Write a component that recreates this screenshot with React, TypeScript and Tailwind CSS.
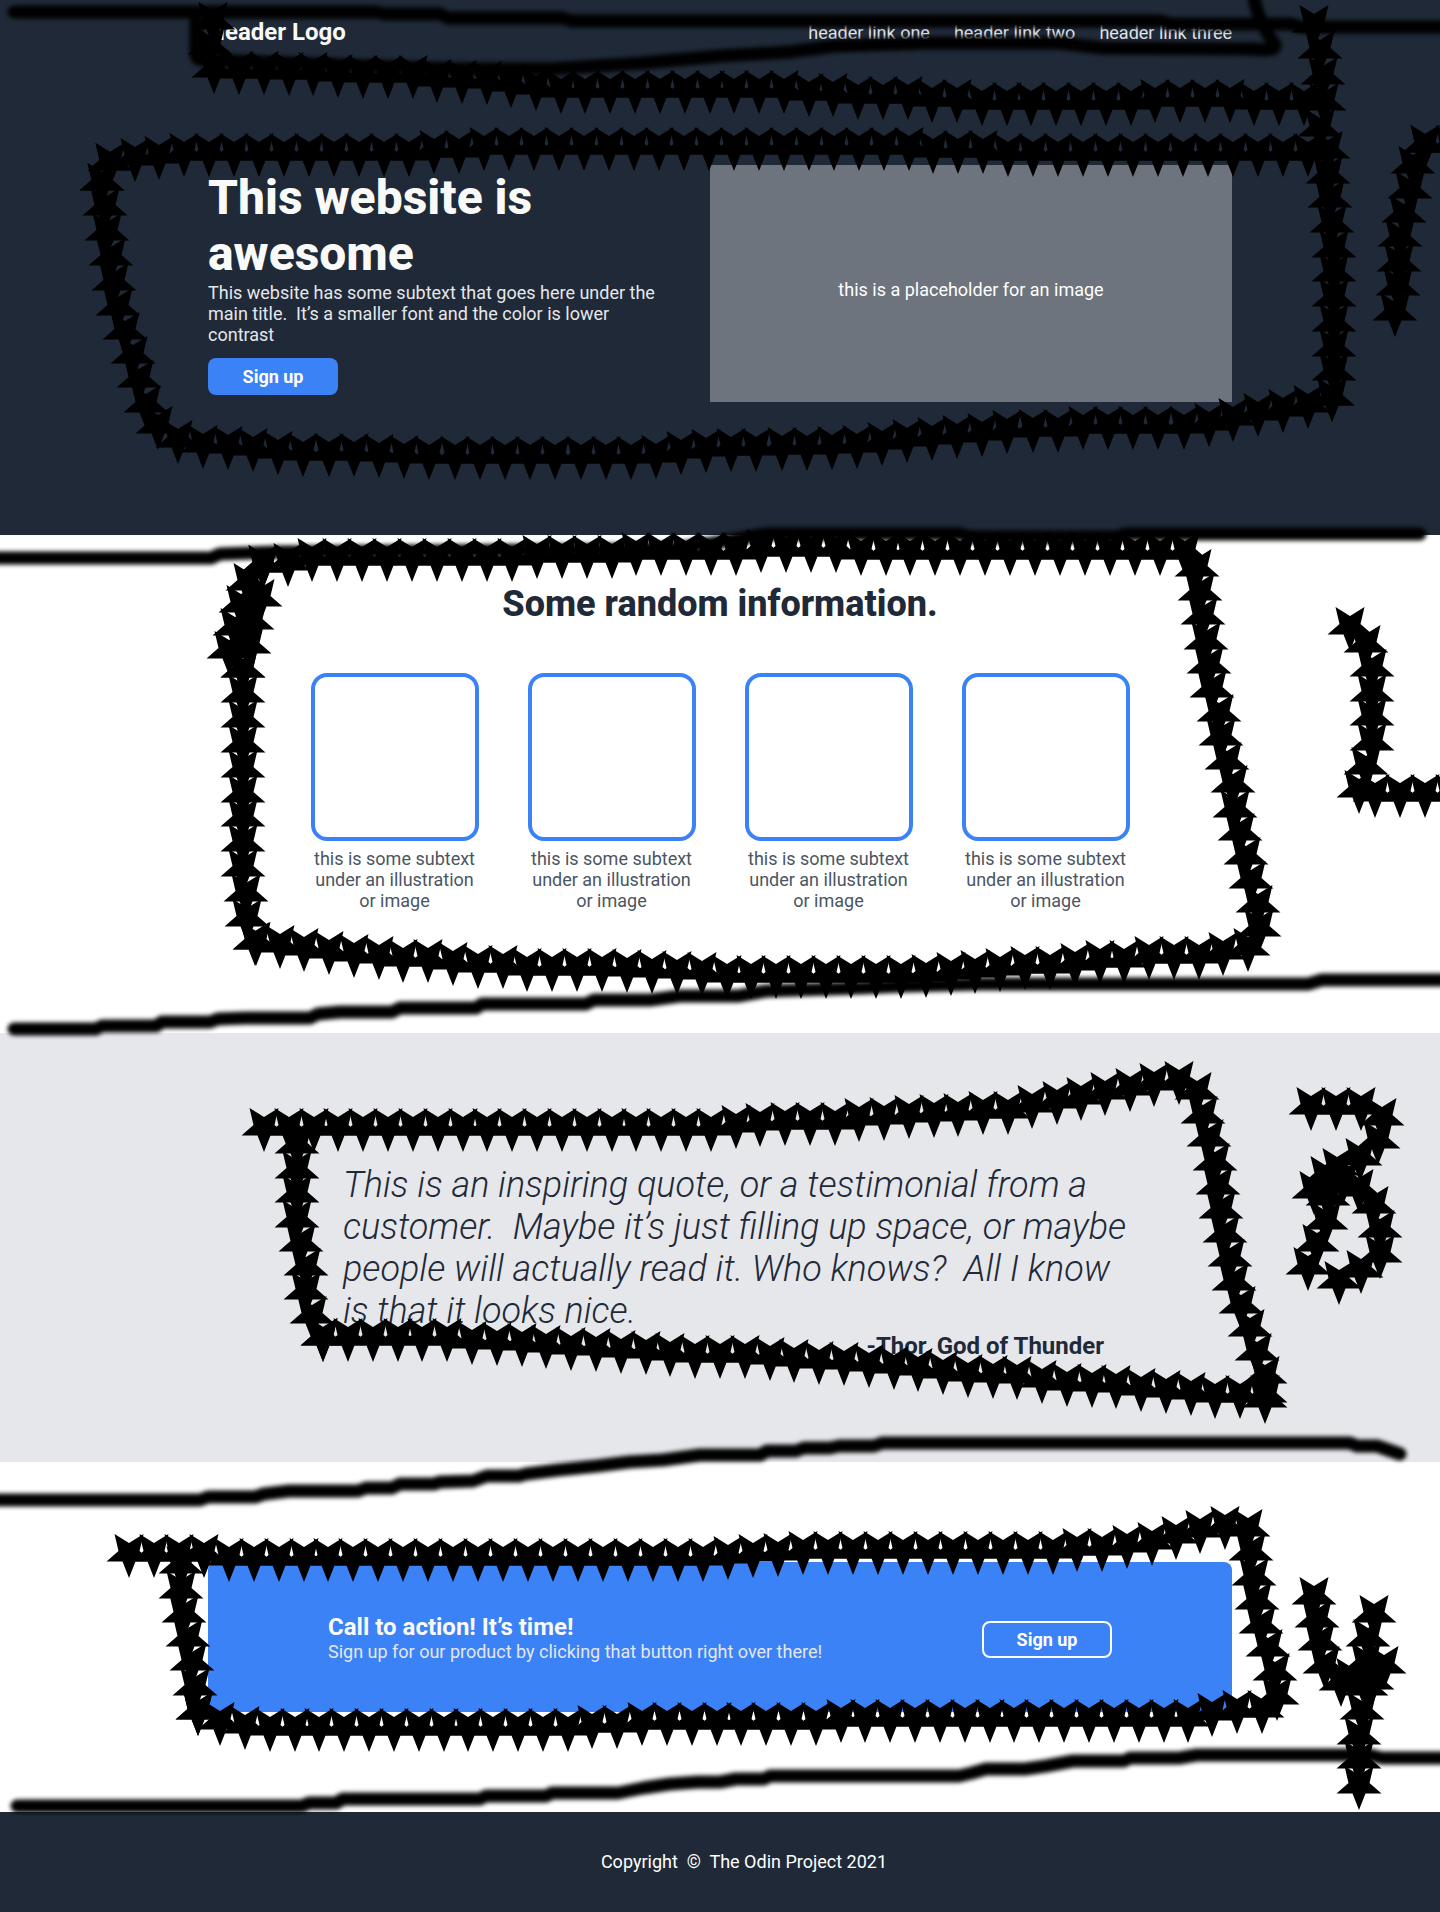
import React from "react";

type Point = [number, number];

const STAR_STEP = 25;

/* Freehand borders and digits, each drawn as a trail of star stamps. */
const trails: Point[][] = [
  // header outline
  [[213, 24], [210, 47], [213, 72], [312, 74], [360, 77], [411, 77], [435, 81], [484, 83], [533, 89], [557, 92], [782, 92], [807, 95], [832, 95], [857, 98], [907, 98], [932, 101], [957, 101], [981, 104], [1131, 104], [1156, 101], [1230, 101], [1253, 104], [1304, 104]],
  [[1314, 27], [1320, 50], [1322, 74], [1325, 98], [1320, 131]],
  // hero outline
  [[110, 165], [135, 160], [185, 155], [408, 155], [435, 152], [459, 152], [484, 149], [909, 149], [933, 152], [984, 152], [1008, 155], [1308, 155]],
  [[1328, 153], [1328, 178], [1334, 252], [1334, 377], [1332, 400]],
  [[1332, 400], [1309, 407], [1260, 415], [1236, 419], [1211, 425], [1187, 428], [1087, 428], [1062, 431], [1013, 431], [964, 437], [914, 440], [866, 446], [816, 449], [741, 450], [691, 451], [666, 457], [616, 458], [441, 458], [416, 457], [343, 455], [293, 455], [243, 449], [194, 446], [170, 440], [153, 423], [144, 401], [132, 354], [117, 308], [114, 283], [107, 234], [102, 185]],
  [[102, 185], [110, 165]],
  // one
  [[1425, 147], [1413, 167], [1410, 193], [1404, 216], [1400, 240], [1398, 290], [1395, 315]],
  [[1425, 147], [1450, 147]],
  // information outline
  [[263, 567], [288, 565], [312, 560], [512, 560], [536, 557], [611, 557], [635, 554], [735, 554], [760, 551], [835, 551], [860, 554], [1185, 554]],
  [[1197, 571], [1206, 644], [1212, 692], [1219, 715], [1221, 739], [1233, 786], [1235, 811], [1251, 883], [1258, 907], [1259, 931]],
  [[1248, 950], [1223, 954], [1199, 958], [1149, 958], [1124, 962], [1100, 962], [1050, 968], [1025, 968], [951, 974], [902, 977], [727, 977], [702, 974], [652, 972], [602, 970], [527, 970], [503, 967], [478, 967], [429, 961], [404, 961], [354, 956], [304, 950], [255, 944]],
  [[256, 944], [247, 922], [246, 896], [243, 872], [243, 672]],
  [[229, 653], [235, 629], [242, 605], [248, 583], [263, 567]],
  [[243, 672], [249, 648], [252, 623], [260, 601]],
  // two
  [[1350, 629], [1366, 646], [1372, 670], [1372, 745], [1366, 770], [1359, 792]],
  [[1375, 796], [1450, 796]],
  // quote outline
  [[264, 1130], [714, 1130], [739, 1126], [789, 1124], [838, 1124], [862, 1120], [912, 1117], [961, 1115], [985, 1113], [1009, 1113], [1034, 1106], [1083, 1099], [1107, 1094], [1155, 1085], [1179, 1083]],
  [[1197, 1094], [1203, 1117], [1215, 1164], [1221, 1213], [1234, 1285], [1242, 1310], [1250, 1331], [1257, 1355], [1265, 1378], [1265, 1402]],
  [[1265, 1397], [1215, 1397], [1190, 1394], [1140, 1390], [1115, 1387], [1066, 1385], [1016, 1378], [967, 1376], [917, 1370], [868, 1366], [794, 1361], [746, 1357], [696, 1357], [671, 1355], [621, 1352], [572, 1349], [522, 1345], [473, 1343], [448, 1340], [323, 1340]],
  [[323, 1340], [313, 1320], [306, 1296], [306, 1271], [297, 1223], [297, 1148]],
  // call to action outline
  [[129, 1556], [204, 1556], [229, 1560], [703, 1560], [728, 1558], [753, 1556], [803, 1553], [1054, 1553], [1078, 1550], [1103, 1550], [1152, 1544], [1176, 1538], [1200, 1532], [1225, 1528]],
  [[1248, 1531], [1251, 1555], [1254, 1580], [1261, 1629], [1268, 1651], [1275, 1675], [1277, 1699]],
  [[1262, 1712], [1237, 1712], [1212, 1715], [1188, 1721], [838, 1721], [814, 1724], [640, 1724], [615, 1727], [590, 1727], [565, 1730], [265, 1730], [240, 1727], [217, 1724], [198, 1714]],
  [[198, 1714], [195, 1689], [188, 1641], [181, 1593], [181, 1568]],
  // four
  [[1314, 1599], [1317, 1622], [1320, 1647], [1326, 1670], [1341, 1685]],
  [[1374, 1617], [1368, 1639], [1366, 1664], [1366, 1688], [1362, 1713], [1359, 1738], [1359, 1788]],
];

/* Stamps of the tightly wound digit three and of the bar of the four. */
const singles: Point[] = [
  [1311, 1109], [1336, 1109], [1361, 1109], [1382, 1120], [1378, 1143], [1360, 1160], [1337, 1170], [1325, 1178],
  [1314, 1193], [1328, 1200], [1326, 1224], [1317, 1246], [1308, 1269], [1339, 1283], [1361, 1272], [1380, 1257],
  [1380, 1232], [1374, 1208], [1359, 1191], [1343, 1183], [1384, 1668], [1372, 1684], [1351, 1680],
];

const brushLines = [
  "M14 12H376L384 14H440L448 18H562L572 21H1160L1170 24H1292L1300 27H1450",
  "M196 18V54Q196 61 206 60L400 67L459 69H551L643 63L720 56L789 52L835 46L927 43H1060L1101 48L1253 49Q1280 52 1274 43Q1258 22 1253 -6",
  "M-8 558H211L220 554L275 552L600 550L680 548L720 542L766 534H960L970 537H1115L1126 534H1420",
  "M14 1029H96L102 1026H156L162 1022H210L218 1019L246 1018H310L318 1014L340 1012H392L400 1008H476L482 1004H586L594 1000H650L680 996H738L766 991L860 988L904 986L982 984H1308L1322 980H1450",
  "M-8 1500H200L208 1497H255L264 1494L289 1491H358L366 1488H392L400 1484H434L440 1482L473 1481L487 1476H519L526 1474L558 1470L597 1466L629 1462L663 1460L700 1455H760L767 1451H796L804 1448H830L839 1446H874L882 1443H1350L1357 1446H1377L1400 1454",
  "M17 1806H302L309 1803H336L343 1799H480L486 1796H546L552 1793H618L643 1788L670 1784L698 1782H720L736 1779H764L770 1776H959L972 1773L986 1769H1025L1046 1766L1073 1761H1124L1130 1758H1179L1197 1755H1370L1382 1758H1450",
];

/* Spreads stamps evenly over a trail, one on each end. */
function stampTrail(points: Point[]): Point[] {
  const lengths = points.slice(1).map(([x, y], i) => Math.hypot(x - points[i][0], y - points[i][1]));
  const total = lengths.reduce((sum, length) => sum + length, 0);
  const count = Math.max(1, Math.round(total / STAR_STEP));
  const stamps: Point[] = [];
  let segment = 0;
  let before = 0;
  for (let i = 0; i <= count; i++) {
    const distance = (total * i) / count;
    while (segment < lengths.length - 1 && distance > before + lengths[segment]) {
      before += lengths[segment];
      segment++;
    }
    const t = (distance - before) / lengths[segment];
    const [x0, y0] = points[segment];
    const [x1, y1] = points[segment + 1];
    stamps.push([Math.round(x0 + (x1 - x0) * t), Math.round(y0 + (y1 - y0) * t)]);
  }
  return stamps;
}

const stars: Point[] = [...trails.flatMap(stampTrail), ...singles];

function Markup() {
  return (
    <svg
      className="pointer-events-none absolute inset-0 h-full w-full"
      viewBox="0 0 1440 1912"
      preserveAspectRatio="none"
      aria-hidden="true"
    >
      <defs>
        <filter id="soft" filterUnits="userSpaceOnUse" x="-20" y="-20" width="1480" height="1952">
          <feGaussianBlur stdDeviation="2" />
        </filter>
        <path
          id="star"
          d="M-14.5-22L0-13L14.5-22L10.5-5L22.5 5.5H6.5L0 22L-6.5 5.5H-22.5L-10.5-5Z"
        />
      </defs>
      <g fill="none" stroke="#000" strokeWidth="13" strokeLinecap="round" strokeLinejoin="round" filter="url(#soft)">
        {brushLines.map((d) => (
          <path key={d} d={d} />
        ))}
      </g>
      <g fill="#000">
        {stars.map(([x, y], i) => (
          <use key={i} href="#star" x={x} y={y} />
        ))}
      </g>
    </svg>
  );
}

const links = ["header link one", "header link two", "header link three"];
const cards = [1, 2, 3, 4];

export default function App() {
  return (
    <div className="relative overflow-hidden bg-white font-[Roboto,sans-serif] text-[18px] leading-[21px]">
      <div className="bg-[#1f2937] pb-[133px]">
        <header className="mx-auto flex max-w-[1024px] items-center justify-between pt-[18px]">
          <div className="text-[24px] leading-[28px] font-bold text-[#f9faf8]">Header Logo</div>
          <nav className="flex gap-6 text-[#e5e7eb]">
            {links.map((label) => (
              <a key={label} href="#">
                {label}
              </a>
            ))}
          </nav>
        </header>
        <section className="mx-auto mt-[119px] flex max-w-[1024px] justify-between">
          <div className="w-[460px] pt-[5px]">
            <h1 className="text-[48px] leading-[56px] font-extrabold text-[#f9faf8]">
              This website is
              <br />
              awesome
            </h1>
            <p className="whitespace-pre-wrap text-[#e5e7eb]">
              {"This website has some subtext that goes here under the main title.  It’s a smaller font and the color is lower contrast"}
            </p>
            <button className="mt-[13px] h-[37px] w-[130px] rounded-lg bg-[#3b82f6] font-bold text-white">Sign up</button>
          </div>
          <div className="flex h-[237px] w-[522px] items-center justify-center bg-[#6d747d] pt-3 text-white">
            this is a placeholder for an image
          </div>
        </section>
      </div>

      <section className="flex flex-col items-center pt-[48px] pb-[122px]">
        <h2 className="text-[36px] leading-[42px] font-extrabold text-[#1f2937]">Some random information.</h2>
        <div className="mt-[48px] flex gap-[49px]">
          {cards.map((id) => (
            <figure key={id} className="w-[168px]">
              <div className="h-[168px] rounded-2xl border-4 border-[#3b82f6]" />
              <figcaption className="mt-[7px] text-center text-[#4b5563]">
                this is some subtext under an illustration or image
              </figcaption>
            </figure>
          ))}
        </div>
      </section>

      <section className="bg-[#e5e7eb] pt-[131px] pb-[102px] text-[#1f2937]">
        <figure className="mx-auto max-w-[1024px] pr-[89px] pl-[135px]">
          <blockquote className="text-[36px] leading-[42px] font-light whitespace-pre-wrap italic">
            {"This is an inspiring quote, or a testimonial from a customer.  Maybe it’s just filling up space, or maybe people will actually read it. Who knows?  All I know is that it looks nice."}
          </blockquote>
          <figcaption className="pr-[39px] text-right text-[24px] leading-[28px] font-bold">
            -Thor, God of Thunder
          </figcaption>
        </figure>
      </section>

      <section className="py-[100px]">
        <div className="mx-auto flex h-[150px] max-w-[1024px] items-center justify-between rounded-lg bg-[#3b82f6] px-[120px]">
          <div>
            <h3 className="text-[24px] leading-[28px] font-bold text-[#f9faf8]">Call to action! It’s time!</h3>
            <p className="text-[#e5e7eb]">
              Sign up for our product by clicking that button right over there!
            </p>
          </div>
          <button className="mt-1 h-[37px] w-[130px] rounded-lg border-2 border-white font-bold text-white">
            Sign up
          </button>
        </div>
      </section>

      <footer className="flex h-[100px] items-center justify-center bg-[#1f2937] pb-[2px] pl-[48px] whitespace-pre text-white">
        {"Copyright  ©  The Odin Project 2021"}
      </footer>

      <Markup />
    </div>
  );
}
